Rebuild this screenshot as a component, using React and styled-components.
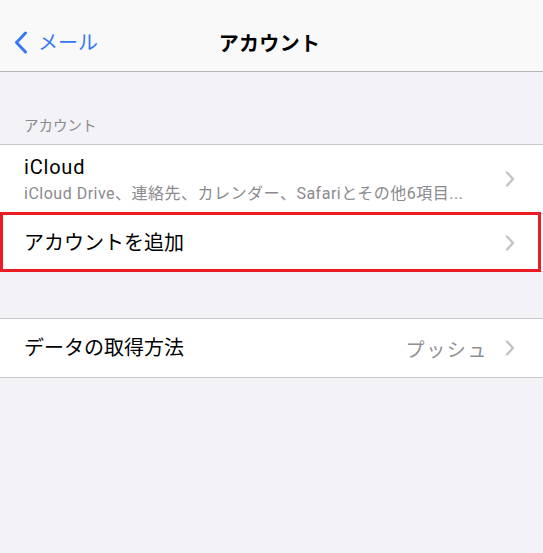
import React from 'react';
import styled, { createGlobalStyle } from 'styled-components';

const GlobalStyle = createGlobalStyle`
  body {
    margin: 0;
    background: #f2f2f7;
    font-family: Roboto, "Noto Sans CJK JP", sans-serif;
    -webkit-font-smoothing: antialiased;
  }
`;

const Page = styled.div`
  min-height: 553px;
  background: #f2f2f7;
`;

const NavBar = styled.div`
  height: 72px;
  box-sizing: border-box;
  padding-top: 14px;
  background: #f9f9fa;
  border-bottom: 1px solid #b4b4b8;
  display: grid;
  grid-template-columns: 1fr auto 1fr;
  align-items: center;
`;

const BackButton = styled.div`
  display: flex;
  align-items: center;
  gap: 10px;
  padding-left: 14px;
  color: #3478f6;
  font-size: 20px;
  line-height: 1;
`;

const NavTitle = styled.div`
  font-size: 20px;
  font-weight: 700;
  color: #000;
  letter-spacing: 0.3px;
  transform: translateX(-2px);
`;

const SectionHeader = styled.div`
  padding: 45px 24px 7px;
  font-size: 14.5px;
  line-height: 20px;
  color: #8a8a8e;
`;

const Group = styled.div`
  background: #fff;
  border-top: 1px solid #c8c7cc;
  border-bottom: 1px solid #c8c7cc;
  margin-top: ${(p) => p.$gap || 0}px;
`;

const Row = styled.div`
  position: relative;
  height: ${(p) => p.$h}px;
  display: flex;
  align-items: center;
  padding: 0 28px 0 24px;
  & + & {
    border-top: 1px solid #c8c7cc;
  }
`;

const Highlight = styled.div`
  position: absolute;
  top: -2px;
  left: 0;
  right: 2px;
  bottom: -1px;
  border: 3px solid #ec1c24;
  pointer-events: none;
`;

const TextBlock = styled.div`
  flex: 1;
  display: flex;
  flex-direction: column;
  min-width: 0;
`;

const Label = styled.div`
  font-size: 20px;
  line-height: 26px;
  color: #000;
  letter-spacing: ${(p) => p.$track || 0}px;
`;

const SubLabel = styled.div`
  font-size: 16px;
  line-height: 20px;
  color: #8a8a8e;
  margin-top: 4px;
  letter-spacing: 0.5px;
  white-space: nowrap;
`;

const Value = styled.div`
  font-size: 19px;
  color: #8e8e93;
  margin-right: 17px;
  letter-spacing: 1.6px;
`;

const Chevron = () => (
  <svg width="10" height="16" viewBox="0 0 10 16">
    <path d="M2 1.5 L8 8 L2 14.5" fill="none" stroke="#c4c4c8" strokeWidth="2.4" strokeLinecap="round" strokeLinejoin="round" />
  </svg>
);

const BackChevron = () => (
  <svg width="14" height="23" viewBox="0 0 14 23">
    <path d="M11.5 2 L2.5 11.5 L11.5 21" fill="none" stroke="#3478f6" strokeWidth="3" strokeLinecap="round" strokeLinejoin="round" />
  </svg>
);

export default function App() {
  return (
    <Page>
      <GlobalStyle />
      <NavBar>
        <BackButton>
          <BackChevron />
          <span>メール</span>
        </BackButton>
        <NavTitle>アカウント</NavTitle>
        <div />
      </NavBar>

      <SectionHeader>アカウント</SectionHeader>
      <Group>
        <Row $h={68}>
          <TextBlock>
            <Label $track={0.8}>iCloud</Label>
            <SubLabel>iCloud Drive、連絡先、カレンダー、Safariとその他6項目...</SubLabel>
          </TextBlock>
          <Chevron />
        </Row>
        <Row $h={57}>
          <TextBlock>
            <Label>アカウントを追加</Label>
          </TextBlock>
          <Chevron />
          <Highlight />
        </Row>
      </Group>

      <Group $gap={46}>
        <Row $h={58}>
          <TextBlock>
            <Label>データの取得方法</Label>
          </TextBlock>
          <Value>プッシュ</Value>
          <Chevron />
        </Row>
      </Group>
    </Page>
  );
}
